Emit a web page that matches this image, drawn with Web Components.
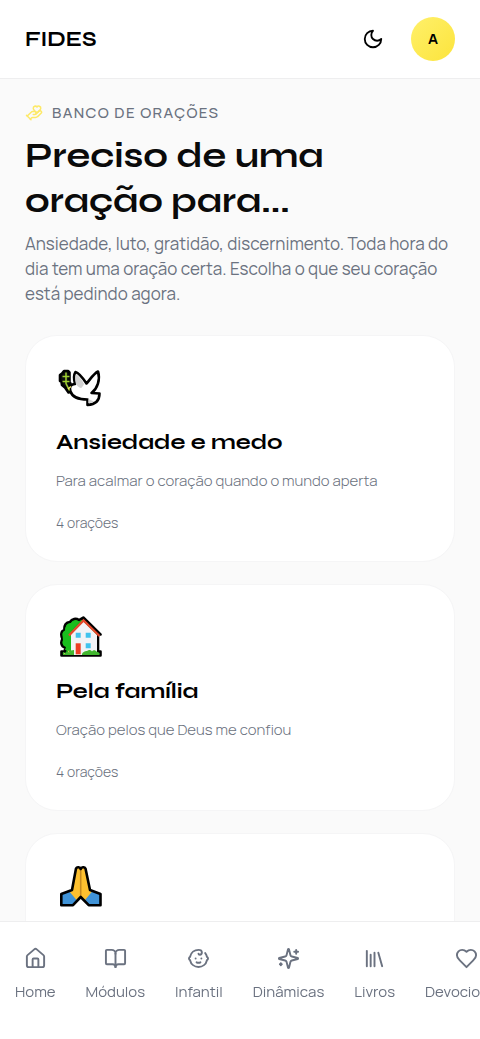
<!DOCTYPE html>
<html lang="pt-BR">
<head>
<meta charset="utf-8">
<meta name="viewport" content="width=device-width, initial-scale=1">
<title>FIDES - Banco de Orações</title>
<style>
    :root {
        --bg: #fafafa;
        --surface: #ffffff;
        --line: #eeeeef;
        --text: #0a0a0a;
        --muted: #6b7280;
        --accent: #fde968;
        --font-title: "Syne", "DejaVu Sans", sans-serif;
        --font-body: "Manrope", "Inter", sans-serif;
    }
    body {
        margin: 0;
        background: var(--bg);
        color: var(--text);
        font-family: var(--font-body);
    }
</style>
</head>
<body>
<fides-app>
    <fides-header slot="header" brand="FIDES" initial="A"></fides-header>

    <page-intro>
        <span slot="eyebrow">BANCO DE ORAÇÕES</span>
        <span slot="title">Preciso de uma oração para...</span>
        Ansiedade, luto, gratidão, discernimento. Toda hora do dia tem uma oração certa. Escolha o que seu coração está pedindo agora.
    </page-intro>

    <prayer-list>
        <prayer-card>
            <svg slot="emoji" viewBox="0 3 48 44" width="48" height="44" aria-hidden="true">
                <path d="M8 7h4l1.500 1.500v10l1 1-1 1 2 3v4l-3 1-3.500-5-3-2.500-.5-3-1.500-1v-6l2-1.500z" fill="#111" stroke="#000" stroke-width="2.600" stroke-linejoin="round"/>
                <path d="M19 20c-1-4-1.500-9 .5-12 4 1 8 7 11 11.500 3-3 7-10 11.500-12 2.500 8-.5 17-6.500 21.500l8 .5c0 7-4 11-12 11.500v-5.500c-9 0-15-2-17-8-1.500-4 0-7.500 4.500-7.500z" fill="#fff" stroke="#000" stroke-width="2.600" stroke-linejoin="round"/>
                <path d="M19.800 19.500c-.8-3-1-7 .2-9.500 3 2 6 6 8 10-1 2-2 3.500-3 4-2-.5-4-2-5.200-4.500z" fill="#d2d2d2"/>
                <path d="M32.300 35l1.700.8 4 1.700c-1.500 1-3.500 1.600-5.700 1.700z" fill="#d2d2d2"/>
                <path d="M10 8.500v11l3.500 7M6.500 12.500h7M6.500 17.500h7" fill="none" stroke="#a0d030" stroke-width="1.500"/>
                <path d="M12 25l3-2.500" stroke="#f1e96b" stroke-width="1.500"/>
            </svg>
            <span slot="title">Ansiedade e medo</span>
            <span slot="text">Para acalmar o coração quando o mundo aperta</span>
            <span slot="count">4 orações</span>
        </prayer-card>

        <prayer-card>
            <svg slot="emoji" viewBox="0 3 48 44" width="48" height="44" aria-hidden="true">
                <path d="M15 42.500H5.500v-4H9v-4C5 33.500 4.500 29 6.500 26 4.500 22 5 18 8.500 17 8 12 10 9 14 9c2-3.500 6-4 9-2l4.300-2.500L44.500 21.500H42v17h2.500v4z" fill="#16b51b" stroke="#000" stroke-width="2.600" stroke-linejoin="round"/>
                <path d="M6.500 22a4.500 4.500 0 0 1 2.500-4.500 7 7 0 0 1 6-7.500 6 6 0 0 1 8-1.500L15 18v19H9l1-3a5 5 0 0 1-3-7z" fill="#19bd1d"/>
                <path d="M15 21L27.500 8.500 41 22v20H15z" fill="#f2f3f6"/>
                <path d="M13 22.500L27.500 7.500 43.500 23" fill="none" stroke="#e5482d" stroke-width="2.300"/>
                <path d="M19.700 19.700h5v5h-5zM29.700 19.700h5v5h-5zM29.700 30.300h5v5h-5z" fill="#42c3ed"/>
                <path d="M19.700 30.300h5v11h-5z" fill="#ed3d24"/>
                <path d="M7 42v-3l2 1 3-1.500 1-2 2 1 3-.5v5zM26 42c0-3 3-4 5-4 2-1.500 4-1 5 .5 2-2 3-1 4.500 0l3 1.500v2z" fill="#41b62e"/>
                <path d="M8 40l1 1M12 37.500l1 2" stroke="#c8c54b"/>
            </svg>
            <span slot="title">Pela família</span>
            <span slot="text">Oração pelos que Deus me confiou</span>
            <span slot="count">4 orações</span>
        </prayer-card>

        <prayer-card>
            <svg slot="emoji" viewBox="0 3 48 44" width="48" height="44" aria-hidden="true">
                <path d="M20 6l4.700-.8 4.800.8 4.500 22.500 10.500 3.500v11H32.500l-7.800-8-7.700 8H5.500V32L16 28z" fill="#fdc02f"/>
                <path d="M5.500 32l7.500-3 7.500 9-4 5h-11zM44 32l-7.500-3-7.500 9 4 5h11z" fill="#4093d7"/>
                <path d="M24.700 7v27" stroke="#c58a21" stroke-width="1.600"/>
                <path d="M20 6.500c1-2 4-1.500 4.700.5.700-2 3.800-2.500 4.800-.5L34 28l10.500 4v11.200H32.700l-8-8.200-7.700 8.200H5.300V32L16 28z" fill="none" stroke="#000" stroke-width="2.600" stroke-linejoin="round"/>
            </svg>
        </prayer-card>
    </prayer-list>

    <bottom-nav slot="nav">
        <nav-item icon="house">Home</nav-item>
        <nav-item icon="book">Módulos</nav-item>
        <nav-item icon="baby">Infantil</nav-item>
        <nav-item icon="sparkles">Dinâmicas</nav-item>
        <nav-item icon="library">Livros</nav-item>
        <nav-item icon="heart">Devocionais</nav-item>
    </bottom-nav>
</fides-app>

<script>
// all line icons live on a 24x24 grid
const ICONS = {
    moon: '<path d="M12 3a6 6 0 0 0 9 9 9 9 0 1 1-9-9Z"/>',
    handHeart: '<path d="M11 14h2a2 2 0 1 0 0-4h-3c-.6 0-1.100.2-1.400.6L3 16"/><path d="m7 20 1.600-1.400c.3-.4.8-.6 1.400-.6h4c1.100 0 2.100-.4 2.800-1.200l4.600-4.400a2 2 0 0 0-2.750-2.910l-4.200 3.900"/><path d="m2 15 6 6"/><path d="M19.500 8.500c.7-.7 1.500-1.600 1.500-2.700A2.730 2.730 0 0 0 16 4a2.780 2.780 0 0 0-5 1.800c0 1.200.8 2 1.500 2.800L16 12Z"/>',
    house: '<path d="M15 21v-8a1 1 0 0 0-1-1h-4a1 1 0 0 0-1 1v8"/><path d="M3 10a2 2 0 0 1 .709-1.528l7-5.999a2 2 0 0 1 2.582 0l7 5.999A2 2 0 0 1 21 10v9a2 2 0 0 1-2 2H5a2 2 0 0 1-2-2z"/>',
    book: '<path d="M12 7v14"/><path d="M3 18a1 1 0 0 1-1-1V4a1 1 0 0 1 1-1h5a4 4 0 0 1 4 4 4 4 0 0 1 4-4h5a1 1 0 0 1 1 1v13a1 1 0 0 1-1 1h-6a3 3 0 0 0-3 3 3 3 0 0 0-3-3z"/>',
    baby: '<path d="M9 12h.01"/><path d="M15 12h.01"/><path d="M10 16c.5.3 1.200.5 2 .5s1.500-.2 2-.5"/><path d="M19 6.300a9 9 0 0 1 1.800 3.900 2 2 0 0 1 0 3.600 9 9 0 0 1-17.600 0 2 2 0 0 1 0-3.600A9 9 0 0 1 12 3c2 0 3.500 1.100 3.500 2.500s-.9 2.500-2 2.500c-.8 0-1.500-.4-1.500-1"/>',
    sparkles: '<path d="M9.937 15.500A2 2 0 0 0 8.500 14.063l-6.135-1.582a.5.5 0 0 1 0-.962L8.500 9.936A2 2 0 0 0 9.937 8.500l1.582-6.135a.5.5 0 0 1 .963 0L14.063 8.500A2 2 0 0 0 15.500 9.937l6.135 1.581a.5.5 0 0 1 0 .964L15.500 14.063a2 2 0 0 0-1.437 1.437l-1.582 6.135a.5.5 0 0 1-.963 0z"/><path d="M20 3v4"/><path d="M22 5h-4"/><path d="M4 17v2"/><path d="M5 18H3"/>',
    library: '<path d="m16 6 4 14"/><path d="M12 6v14"/><path d="M8 8v12"/><path d="M4 4v16"/>',
    heart: '<path d="M19 14c1.490-1.460 3-3.210 3-5.500A5.500 5.500 0 0 0 16.500 3c-1.760 0-3 .5-4.500 2-1.500-1.500-2.740-2-4.500-2A5.500 5.500 0 0 0 2 8.500c0 2.300 1.500 4.050 3 5.500l7 7Z"/>'
};

function icon(name, size) {
    return `<svg viewBox="0 0 24 24" width="${size}" height="${size}" fill="none" stroke="currentColor" stroke-width="2" stroke-linecap="round" stroke-linejoin="round" aria-hidden="true">${ICONS[name]}</svg>`;
}

class FidesApp extends HTMLElement {
    constructor() {
        super();
        this.attachShadow({mode: 'open'});
        this.shadowRoot.innerHTML = `
        <style>
        :host {
            display: flex;
            flex-direction: column;
            height: 100vh;
        }
        main {
            flex: 1;
            min-height: 0;
            overflow-y: auto;
            scrollbar-width: none;
            padding: 23px 25px 140px;
        }
        </style>
        <slot name="header"></slot>
        <main><slot></slot></main>
        <slot name="nav"></slot>
        `;
    }
}
customElements.define('fides-app', FidesApp);

class FidesHeader extends HTMLElement {
    constructor() {
        super();
        this.attachShadow({mode: 'open'});
    }

    connectedCallback() {
        this.shadowRoot.innerHTML = `
        <style>
        :host {
            display: block;
            background: var(--surface);
            border-bottom: 1px solid var(--line);
        }
        header {
            display: flex;
            align-items: center;
            gap: 16px;
            padding: 17px 25px;
        }
        a {
            margin-right: auto;
            padding-top: 2px;
            color: #000;
            font: 700 21px/28px var(--font-title);
            text-decoration: none;
        }
        button {
            display: grid;
            place-items: center;
            width: 44px;
            height: 44px;
            padding: 0;
            border: 0;
            border-radius: 50%;
            background: none;
            color: #000;
            font: 700 15px/20px var(--font-body);
            cursor: pointer;
        }
        .avatar {
            background: linear-gradient(135deg, #fff06a, #fce43c);
        }
        </style>
        <header>
            <a href="#">${this.getAttribute('brand')}</a>
            <button type="button" aria-label="Tema escuro">${icon('moon', 22)}</button>
            <button type="button" class="avatar">${this.getAttribute('initial')}</button>
        </header>
        `;
    }
}
customElements.define('fides-header', FidesHeader);

class PageIntro extends HTMLElement {
    constructor() {
        super();
        this.attachShadow({mode: 'open'});
        this.shadowRoot.innerHTML = `
        <style>
        :host {
            display: block;
            margin-bottom: 29px;
        }
        .eyebrow {
            display: flex;
            align-items: center;
            gap: 9px;
            color: var(--muted);
            font-size: 15px;
            font-weight: 500;
            line-height: 22px;
            letter-spacing: 0.09em;
        }
        .eyebrow svg {
            color: var(--accent);
        }
        h1 {
            margin: 10px 0 7px;
            font: 700 35px/45px var(--font-title);
        }
        p {
            margin: 0;
            color: var(--muted);
            font-size: 17px;
            line-height: 25px;
        }
        </style>
        <div class="eyebrow">${icon('handHeart', 18)}<slot name="eyebrow"></slot></div>
        <h1><slot name="title"></slot></h1>
        <p><slot></slot></p>
        `;
    }
}
customElements.define('page-intro', PageIntro);

class PrayerList extends HTMLElement {
    constructor() {
        super();
        this.attachShadow({mode: 'open'});
        this.shadowRoot.innerHTML = `
        <style>
        :host {
            display: grid;
            gap: 22px;
        }
        </style>
        <slot></slot>
        `;
    }
}
customElements.define('prayer-list', PrayerList);

class PrayerCard extends HTMLElement {
    constructor() {
        super();
        this.attachShadow({mode: 'open'});
        this.shadowRoot.innerHTML = `
        <style>
        :host {
            display: block;
            box-sizing: border-box;
            min-height: 227px;
            padding: 31px 30px 28px;
            border: 1px solid #f5f5f6;
            border-radius: 32px;
            background: var(--surface);
        }
        ::slotted(svg) {
            display: block;
        }
        h2 {
            margin: 17px 0 13px;
            color: #000;
            font: 700 22px/28px var(--font-title);
        }
        p {
            margin: 0 0 20px;
            color: var(--muted);
            font-size: 15px;
            font-weight: 300;
            line-height: 24px;
        }
        .count {
            color: var(--muted);
            font-size: 14px;
            font-weight: 300;
            line-height: 20px;
        }
        </style>
        <slot name="emoji"></slot>
        <h2><slot name="title"></slot></h2>
        <p><slot name="text"></slot></p>
        <div class="count"><slot name="count"></slot></div>
        `;
    }
}
customElements.define('prayer-card', PrayerCard);

class BottomNav extends HTMLElement {
    constructor() {
        super();
        this.attachShadow({mode: 'open'});
        // stays over the scrolling list
        this.shadowRoot.innerHTML = `
        <style>
        :host {
            position: fixed;
            left: 0;
            right: 0;
            bottom: 0;
            border-top: 1px solid var(--line);
            background: rgba(255, 255, 255, 0.95);
            backdrop-filter: blur(12px);
        }
        nav {
            display: flex;
            overflow-x: auto;
            scrollbar-width: none;
            padding: 25px 0 36px;
        }
        </style>
        <nav><slot></slot></nav>
        `;
    }
}
customElements.define('bottom-nav', BottomNav);

class NavItem extends HTMLElement {
    constructor() {
        super();
        this.attachShadow({mode: 'open'});
    }

    connectedCallback() {
        this.shadowRoot.innerHTML = `
        <style>
        :host {
            display: block;
            flex: none;
        }
        a {
            display: flex;
            flex-direction: column;
            align-items: center;
            gap: 11px;
            padding: 0 15px;
            color: var(--muted);
            font-size: 15px;
            line-height: 22px;
            text-decoration: none;
        }
        </style>
        <a href="#">${icon(this.getAttribute('icon'), 23)}<span><slot></slot></span></a>
        `;
    }
}
customElements.define('nav-item', NavItem);
</script>
</body>
</html>
